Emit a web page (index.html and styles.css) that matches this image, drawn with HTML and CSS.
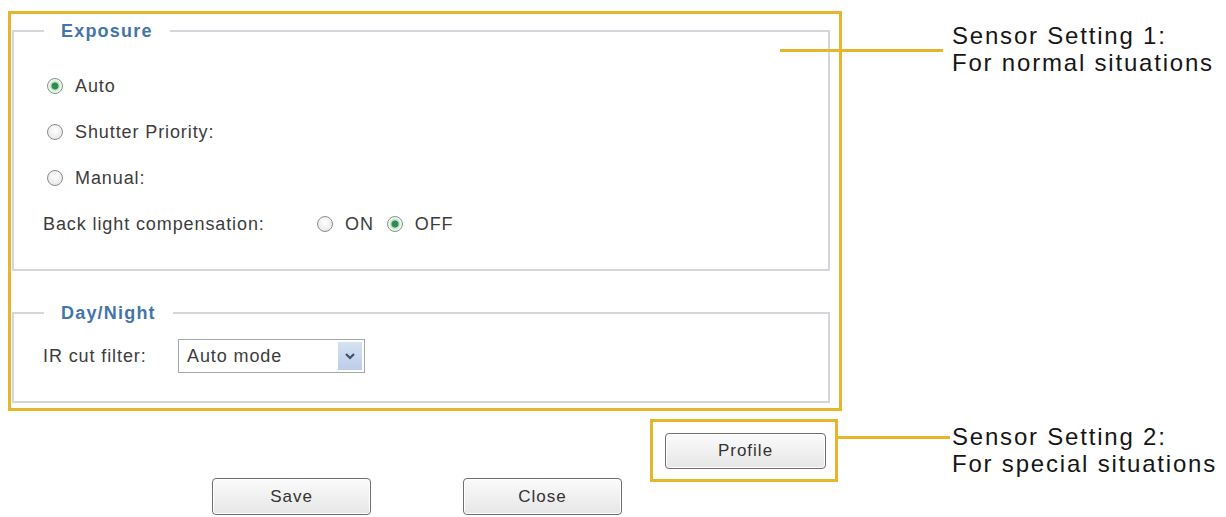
FILE: index.html
```html
<!DOCTYPE html>
<html lang="en">
<head>
    <meta charset="UTF-8">
    <meta name="viewport" content="width=device-width, initial-scale=1.0">
    <title>Sensor Setting</title>
    <link rel="stylesheet" href="styles.css">
</head>
<body>
    <div class="page">
        <div class="panel">
            <div class="frame">
                <fieldset class="group exposure">
                    <legend>Exposure</legend>
                    <label class="choice"><input type="radio" name="exposure" checked> Auto</label>
                    <label class="choice"><input type="radio" name="exposure"> Shutter Priority:</label>
                    <label class="choice"><input type="radio" name="exposure"> Manual:</label>
                    <div class="row">
                        <span class="row-label blc">Back light compensation:</span>
                        <label class="choice inline"><input type="radio" name="blc"> ON</label>
                        <label class="choice inline"><input type="radio" name="blc" checked> OFF</label>
                    </div>
                </fieldset>

                <fieldset class="group daynight">
                    <legend>Day/Night</legend>
                    <div class="row">
                        <span class="row-label ir">IR cut filter:</span>
                        <div class="select">
                            <span class="select-value">Auto mode</span>
                            <span class="select-arrow">
                                <svg width="12" height="10" viewBox="0 0 12 10"><path d="M2 3 L6 7 L10 3" fill="none" stroke="#3f4f6e" stroke-width="2.2"/></svg>
                            </span>
                        </div>
                    </div>
                </fieldset>
            </div>

            <div class="actions">
                <div class="buttons">
                    <button type="button" class="btn">Save</button>
                    <button type="button" class="btn">Close</button>
                </div>
                <div class="profile-box">
                    <button type="button" class="btn profile">Profile</button>
                </div>
            </div>
        </div>

        <div class="notes">
            <p class="note note-normal">Sensor Setting 1:<br>For normal situations</p>
            <p class="note note-special">Sensor Setting 2:<br>For special situations</p>
        </div>
    </div>
</body>
</html>
```

FILE: styles.css
```css
body {
    margin: 0;
    background: #ffffff;
    font-family: 'Liberation Sans', Arial, sans-serif;
    color: #3c3c3c;
}
.page {
    display: flex;
    padding: 11px 0 0 8px;
    height: 506px;
    overflow: hidden;
}
.panel {
    width: 834px;
    flex: none;
}
.frame {
    border: 3px solid #e5b52c;
    padding: 0 9px 5px 1px;
}
.group {
    margin: 7px 0 0;
    border: 2px solid #d3d6da;
    padding: 22px 0 22px 29px;
    min-width: 0;
}
.group legend {
    color: #4474aa;
    font-weight: bold;
    font-size: 18px;
    letter-spacing: 1.2px;
    line-height: 20px;
    padding: 0 17px 0 17px;
    margin-left: 1px;
}
.daynight {
    margin-top: 32px;
    padding: 16px 0 28px 29px;
}
.choice {
    display: flex;
    align-items: center;
    height: 46px;
    font-size: 18px;
    letter-spacing: 0.9px;
    padding-left: 4px;
}
.choice input {
    appearance: none;
    -webkit-appearance: none;
    width: 16px;
    height: 16px;
    margin: 0 12px 0 0;
    border: 1px solid #8c8c8c;
    border-radius: 50%;
    background: radial-gradient(circle at 50% 40%, #ffffff, #e2e2e2);
    flex: none;
}
.choice input:checked {
    border-color: #7f9886;
    background: radial-gradient(circle, #2f8d50 0 3px, #bfe0c8 4px, #f2f6f3 6px);
}
.row {
    display: flex;
    align-items: center;
    height: 46px;
    font-size: 18px;
    letter-spacing: 0.9px;
}
.row-label.blc {
    width: 274px;
}
.row-label.ir {
    width: 135px;
}
.choice.inline {
    padding-left: 0;
    margin-right: 13px;
}
.daynight .row {
    height: 34px;
}
.select {
    display: flex;
    align-items: center;
    width: 185px;
    height: 32px;
    border: 1px solid #a3a6aa;
    background: #fff;
}
.select-value {
    flex: 1;
    padding-left: 8px;
}
.select-arrow {
    display: flex;
    align-items: center;
    justify-content: center;
    width: 24px;
    height: 28px;
    margin-right: 2px;
    background: linear-gradient(#d6e1f2, #bccde8);
}
.actions {
    display: grid;
    grid-template-columns: 1fr auto;
}
.buttons {
    display: flex;
    gap: 92px;
    padding: 67px 0 0 204px;
}
.btn {
    width: 159px;
    height: 37px;
    border: 1px solid #6e6e6e;
    border-radius: 4px;
    background: linear-gradient(#fbfbfb, #e6e6e6);
    box-shadow: inset 0 0 0 1px #ffffff;
    font-family: 'Liberation Sans', Arial, sans-serif;
    font-size: 17px;
    letter-spacing: 1px;
    color: #333;
    padding: 0;
}
.profile-box {
    align-self: start;
    margin: 8px 4px 0 0;
    border: 3px solid #e5b52c;
    padding: 11px 9px 10px 12px;
}
.profile {
    display: block;
    width: 161px;
    height: 36px;
}
.notes {
    margin-left: 110px;
}
.note {
    position: relative;
    margin: 0;
    font-size: 24px;
    letter-spacing: 1.8px;
    line-height: 27px;
    color: #161616;
    white-space: nowrap;
}
.note::before {
    content: "";
    position: absolute;
    height: 3px;
    background: #e5b52c;
}
.note-normal {
    margin-top: 11px;
}
.note-normal::before {
    top: 27px;
    left: -172px;
    width: 163px;
}
.note-special {
    margin-top: 347px;
}
.note-special::before {
    top: 13px;
    left: -114px;
    width: 112px;
}
```
